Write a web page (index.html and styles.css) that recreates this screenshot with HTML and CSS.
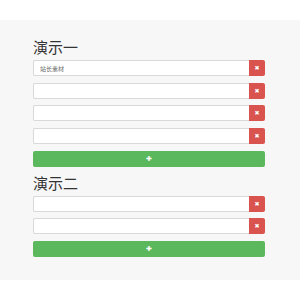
FILE: index.html
```html
<!DOCTYPE html>
<html lang="zh-CN">
<head>
    <meta charset="UTF-8">
    <meta name="viewport" content="width=device-width, initial-scale=1.0">
    <title>演示</title>
    <link rel="stylesheet" href="styles.css">
</head>
<body>
    <div class="panel">
        <!--demo one-->
        <div class="demo">
            <h2 class="title">演示一</h2>
            <div class="row">
                <input type="text" class="field" value="站长素材">
                <button type="button" class="del">&#10006;</button>
            </div>
            <div class="row">
                <input type="text" class="field">
                <button type="button" class="del">&#10006;</button>
            </div>
            <div class="row">
                <input type="text" class="field">
                <button type="button" class="del">&#10006;</button>
            </div>
            <div class="row">
                <input type="text" class="field">
                <button type="button" class="del">&#10006;</button>
            </div>
            <button type="button" class="add">&#10010;</button>
        </div>
        <!--demo two-->
        <div class="demo">
            <h2 class="title">演示二</h2>
            <div class="row">
                <input type="text" class="field">
                <button type="button" class="del">&#10006;</button>
            </div>
            <div class="row">
                <input type="text" class="field">
                <button type="button" class="del">&#10006;</button>
            </div>
            <button type="button" class="add">&#10010;</button>
        </div>
    </div>
</body>
</html>
```

FILE: styles.css
```css
body {
    margin: 0;
    background-color: #fff;
    font-family: 'Liberation Sans', 'Noto Sans CJK SC', sans-serif;
}

.panel {
    margin-top: 20px;
    height: 260px;
    box-sizing: border-box;
    background-color: #f7f7f7;
    padding: 20px 35px 0 33px;
    display: flex;
    flex-direction: column;
    gap: 9px;
}

.demo {
    display: flex;
    flex-direction: column;
    gap: 6.7px;
}

.title {
    margin: 0 0 -1.7px 0;
    font-size: 15px;
    line-height: 15px;
    font-weight: normal;
    color: #333;
}

.row {
    display: flex;
    height: 16px;
}

.field {
    flex: 1;
    min-width: 0;
    margin: 0;
    box-sizing: border-box;
    height: 16px;
    border: 1px solid #d9d9d9;
    border-right: none;
    border-radius: 2px 0 0 2px;
    background-color: #fff;
    padding: 0 6px;
    font-family: 'Noto Sans CJK SC', sans-serif;
    font-size: 6px;
    color: #666;
}

.del {
    width: 16px;
    height: 16px;
    padding: 0;
    border: none;
    border-radius: 0 2px 2px 0;
    background-color: #d9534f;
    color: #fff;
    font-family: 'DejaVu Sans', sans-serif;
    font-size: 6px;
    line-height: 16px;
    cursor: pointer;
}

.add {
    height: 16px;
    padding: 0;
    border: none;
    border-radius: 2px;
    background-color: #5cb85c;
    color: #fff;
    font-family: 'DejaVu Sans', sans-serif;
    font-size: 7px;
    line-height: 16px;
    cursor: pointer;
}
```
